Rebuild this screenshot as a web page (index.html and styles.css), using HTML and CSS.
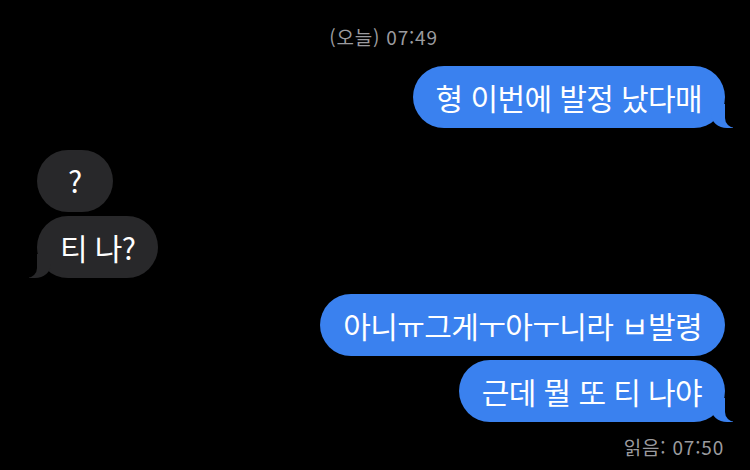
FILE: index.html
```html
<!DOCTYPE html>
<html lang="ko">
<head>
    <meta charset="UTF-8">
    <meta name="viewport" content="width=device-width, initial-scale=1.0">
    <title>메시지</title>
    <link rel="stylesheet" href="styles.css">
</head>
<body>
    <div class="chat">
        <div class="timestamp">(오늘) 07:49</div>

        <div class="group sent first-group">
            <div class="bubble sent-bubble tail">형 이번에 발정 났다매</div>
        </div>

        <div class="group received">
            <div class="bubble recv-bubble small">?</div>
            <div class="bubble recv-bubble tail">티 나?</div>
        </div>

        <div class="group sent last-group">
            <div class="bubble sent-bubble">아니ㅠ그게ㅜ아ㅜ니라 ㅂ발령</div>
            <div class="bubble sent-bubble tail">근데 뭘 또 티 나야</div>
        </div>

        <div class="read">읽음: 07:50</div>
    </div>
</body>
</html>
```

FILE: styles.css
```css
body {
    margin: 0;
    padding: 0;
    background: #000;
    font-family: "Noto Sans CJK KR", "Noto Sans", sans-serif;
    color: #fff;
}
.chat {
    display: flex;
    flex-direction: column;
    padding: 24px 25px 0 37px;
}
.timestamp {
    text-align: center;
    font-size: 19px;
    line-height: 26px;
    letter-spacing: 0.8px;
    color: #9b9b9f;
    padding-left: 5px;
}
.group {
    display: flex;
    flex-direction: column;
    gap: 4px;
}
.sent {
    align-items: flex-end;
}
.received {
    align-items: flex-start;
}
.first-group {
    margin-top: 16px;
}
.received {
    margin-top: 22px;
}
.last-group {
    margin-top: 16px;
}
.bubble {
    position: relative;
    font-size: 30px;
    line-height: 36px;
    padding: 13px 23px;
    border-radius: 31px;
    letter-spacing: -0.6px;
}
.sent-bubble {
    background: #3a81ef;
}
.recv-bubble {
    background: #28282a;
}
.recv-bubble.small {
    padding: 12px 31px 14px;
}
.bubble.tail::before,
.bubble.tail::after {
    content: "";
    position: absolute;
    bottom: 0;
    height: 24px;
}
.sent-bubble.tail::before {
    right: -8px;
    width: 22px;
    background: #3a81ef;
    border-bottom-left-radius: 16px 14px;
}
.sent-bubble.tail::after {
    right: -26px;
    width: 26px;
    background: #000;
    border-bottom-left-radius: 10px;
}
.recv-bubble.tail::before {
    left: -8px;
    width: 22px;
    background: #28282a;
    border-bottom-right-radius: 16px 14px;
}
.recv-bubble.tail::after {
    left: -26px;
    width: 26px;
    background: #000;
    border-bottom-right-radius: 10px;
}
.read {
    align-self: flex-end;
    margin-top: 12px;
    font-size: 19px;
    line-height: 26px;
    letter-spacing: 0.8px;
    color: #9b9b9f;
    padding-right: 1px;
}
```
